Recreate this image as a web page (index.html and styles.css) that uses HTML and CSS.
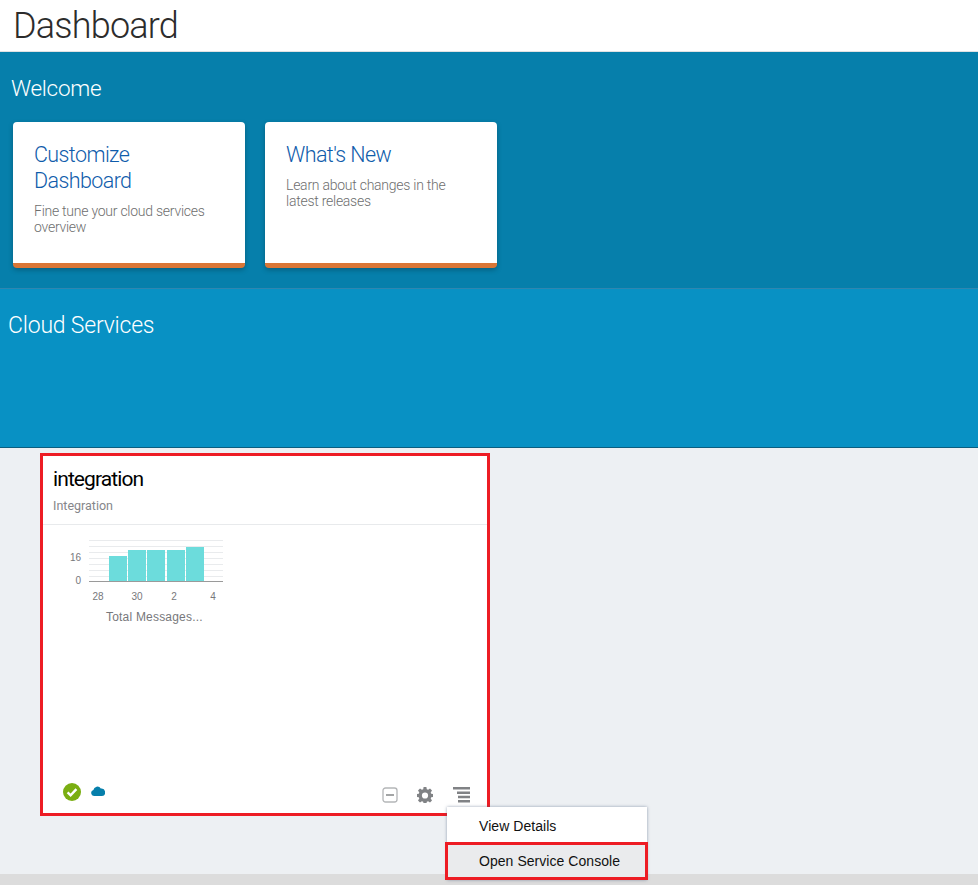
FILE: index.html
```html
<!DOCTYPE html>
<html lang="en">
<head>
<meta charset="utf-8">
<title>Dashboard</title>
<link rel="stylesheet" href="styles.css">
</head>
<body>
<header class="page-header"><h1>Dashboard</h1></header>
<section class="welcome">
  <h2>Welcome</h2>
  <div class="tiles">
    <a class="tile"><h3>Customize Dashboard</h3><p>Fine tune your cloud services overview</p></a>
    <a class="tile"><h3>What's New</h3><p>Learn about changes in the latest releases</p></a>
  </div>
</section>
<section class="cloud"><h2>Cloud Services</h2></section>
<main class="content">
  <article class="card">
    <div class="card-head">
      <h3>integration</h3>
      <div class="sub">Integration</div>
    </div>
    <div class="card-body">
      <svg class="chart" width="180" height="92" viewBox="0 0 180 92">
        <g class="grid">
          <path d="M46 12.5H181M46 18.5H181M46 24.5H181M46 30.5H181M46 36.5H181M46 42.5H181M46 48.5H181"/>
        </g>
        <g class="bars">
          <rect x="66" y="28" width="18" height="25"/>
          <rect x="85" y="22" width="18" height="31"/>
          <rect x="104" y="22" width="18" height="31"/>
          <rect x="124" y="22" width="18" height="31"/>
          <rect x="143" y="19" width="18" height="34"/>
        </g>
        <path class="axis" d="M46 53.5H181"/>
        <g class="labels">
          <text x="38" y="33" text-anchor="end">16</text>
          <text x="38" y="56" text-anchor="end">0</text>
          <text x="55" y="72" text-anchor="middle">28</text>
          <text x="94" y="72" text-anchor="middle">30</text>
          <text x="131" y="72" text-anchor="middle">2</text>
          <text x="170" y="72" text-anchor="middle">4</text>
        </g>
      </svg>
      <div class="chart-title">Total Messages...</div>
    </div>
    <div class="card-foot">
      <div class="status">
        <svg width="18" height="18" viewBox="0 0 18 18"><circle cx="9" cy="9" r="9" fill="#7aae12"/><path d="M4.6 9.3l3 3 5.8-6.2" fill="none" stroke="#fff" stroke-width="2.4"/></svg>
        <svg width="14" height="10" viewBox="0 0 14 10"><path d="M3 10a3 3 0 0 1-.6-5.9A4 4 0 0 1 9.8 2.6 3.7 3.7 0 0 1 11 10z" fill="#067fab"/></svg>
      </div>
      <div class="actions">
        <svg width="16" height="16" viewBox="0 0 16 16"><rect x="1" y="1" width="14" height="14" rx="2.5" fill="none" stroke="#b4b6b8" stroke-width="1.3"/><path d="M4 8h8" stroke="#8c8e90" stroke-width="1.6"/></svg>
        <svg width="16" height="16" viewBox="0 0 16 16"><path fill="#808285" fill-rule="evenodd" d="M6.6 0h2.8l.4 2.2 1.3.6L13 1.5l2 2-1.3 1.9.5 1.3 2.3.4v2.8l-2.3.4-.5 1.3 1.3 1.9-2 2-1.9-1.3-1.3.5-.4 2.3H6.6l-.4-2.3-1.3-.5L3 15.5l-2-2 1.3-1.9-.5-1.3L-.5 9.9V7.1l2.3-.4.5-1.3L1 3.5l2-2 1.9 1.3 1.3-.6zM8 5.4a3.1 3.1 0 1 0 0 6.2 3.1 3.1 0 0 0 0-6.2z"/></svg>
        <svg width="18" height="16" viewBox="0 0 18 16"><path fill="#808285" d="M0 0h17v2.6H0zM4 4.4h13v2.6H4zM5 8.7h12v2.6H5zM5 13h12v2.6H5z"/></svg>
      </div>
    </div>
  </article>
  <nav class="menu">
    <div class="menu-item">View Details</div>
    <div class="menu-item active">Open Service Console</div>
  </nav>
</main>
<div class="bottom-strip"></div>
</body>
</html>
```
FILE: styles.css
```css
* { box-sizing: border-box; }
html, body { margin: 0; height: 885px; overflow: hidden; }
body { font-family: "Liberation Sans", Arial, sans-serif; background: #edf0f3; display: flex; flex-direction: column; }
.page-header { height: 52px; background: #fff; border-bottom: 1px solid #dfe1e2; padding-left: 13px; flex: none; }
.page-header h1 { margin: 0; font-family: Roboto, sans-serif; font-weight: 300; font-size: 36px; line-height: 53px; color: #2c2c2c; letter-spacing: -0.8px; }
.welcome { height: 237px; background: #067fab; border-bottom: 1px solid #2f86b0; padding: 23px 13px 0; flex: none; }
.welcome h2, .cloud h2 { margin: 0; font-family: Roboto, sans-serif; font-weight: 300; color: #fff; letter-spacing: -0.3px; }
.welcome h2 { font-size: 22.5px; line-height: 26px; margin-left: -2px; }
.tiles { display: flex; gap: 20px; margin-top: 21px; }
.tile { width: 232px; height: 146px; background: #fff; border-radius: 4px; border-bottom: 5px solid #d97636; box-shadow: 0 2px 5px rgba(0,0,0,.25); padding: 20px 21px 0; display: block; }
.tile h3 { margin: 0; font-family: Roboto, sans-serif; font-weight: 300; font-size: 21.5px; line-height: 26px; color: #0f5cab; letter-spacing: -0.6px; }
.tile p { margin: 9px 0 0; font-family: Roboto, sans-serif; font-weight: 300; font-size: 14px; line-height: 16px; color: #6e6e6e; letter-spacing: -0.25px; }
.cloud { height: 159px; background: #0891c4; border-bottom: 1px solid #0b5e80; padding: 24px 8px 0; flex: none; }
.cloud h2 { font-size: 23px; line-height: 26px; letter-spacing: -0.2px; }
.content { position: relative; flex: 1; min-height: 0; padding: 5px 0 0 40px; }
.card { width: 450px; height: 363px; background: #fff; border: 3px solid #ed1c24; display: flex; flex-direction: column; }
.card-head { height: 69px; border-bottom: 1px solid #e8eaec; padding: 10px 10px 0; flex: none; }
.card-head h3 { margin: 0; font-family: Roboto, sans-serif; font-weight: 400; font-size: 21px; line-height: 26px; color: #000; letter-spacing: -0.9px; }
.sub { margin-top: 6px; font-size: 12.5px; line-height: 16px; color: #85868a; font-family: Roboto, sans-serif; }
.card-body { flex: 1; padding-top: 3px; position: relative; }
.chart { display: block; }
.grid path { stroke: #e9ebed; stroke-width: 1; fill: none; }
.bars rect { fill: #6cdcdc; }
.axis { stroke: #9a9a9a; stroke-width: 1; fill: none; }
.labels text { font-family: "Liberation Sans", sans-serif; font-size: 10px; fill: #77787b; }
.chart-title { position: absolute; left: 63px; top: 84px; font-size: 12px; line-height: 16px; color: #77787b; white-space: nowrap; letter-spacing: 0.2px; }
.card-foot { height: 41px; flex: none; display: flex; justify-content: space-between; padding: 0 16px 0 20px; }
.status { display: flex; gap: 11px; align-items: flex-start; padding-top: 11px; }
.status svg:last-child { margin-top: 3px; margin-left: -1px; }
.actions { display: flex; gap: 20px; padding-top: 15px; align-items: flex-start; }
.actions svg:nth-child(2) { margin-left: -1px; }
.menu { position: absolute; left: 447px; top: 359px; width: 200px; background: #fff; box-shadow: 0 0 3px rgba(70,90,120,.55); z-index: 2; }
.menu-item { height: 36px; padding-left: 32px; font-size: 14px; line-height: 38px; color: #111; letter-spacing: 0.05px; }
.menu-item.active { height: 38px; line-height: 32px; background: #eaebed; border: 3px solid #ed1c24; margin-left: -2px; padding-left: 31px; width: 203px; margin-top: -1px; }
.bottom-strip { height: 11px; background: #dcdcdc; flex: none; }
```
